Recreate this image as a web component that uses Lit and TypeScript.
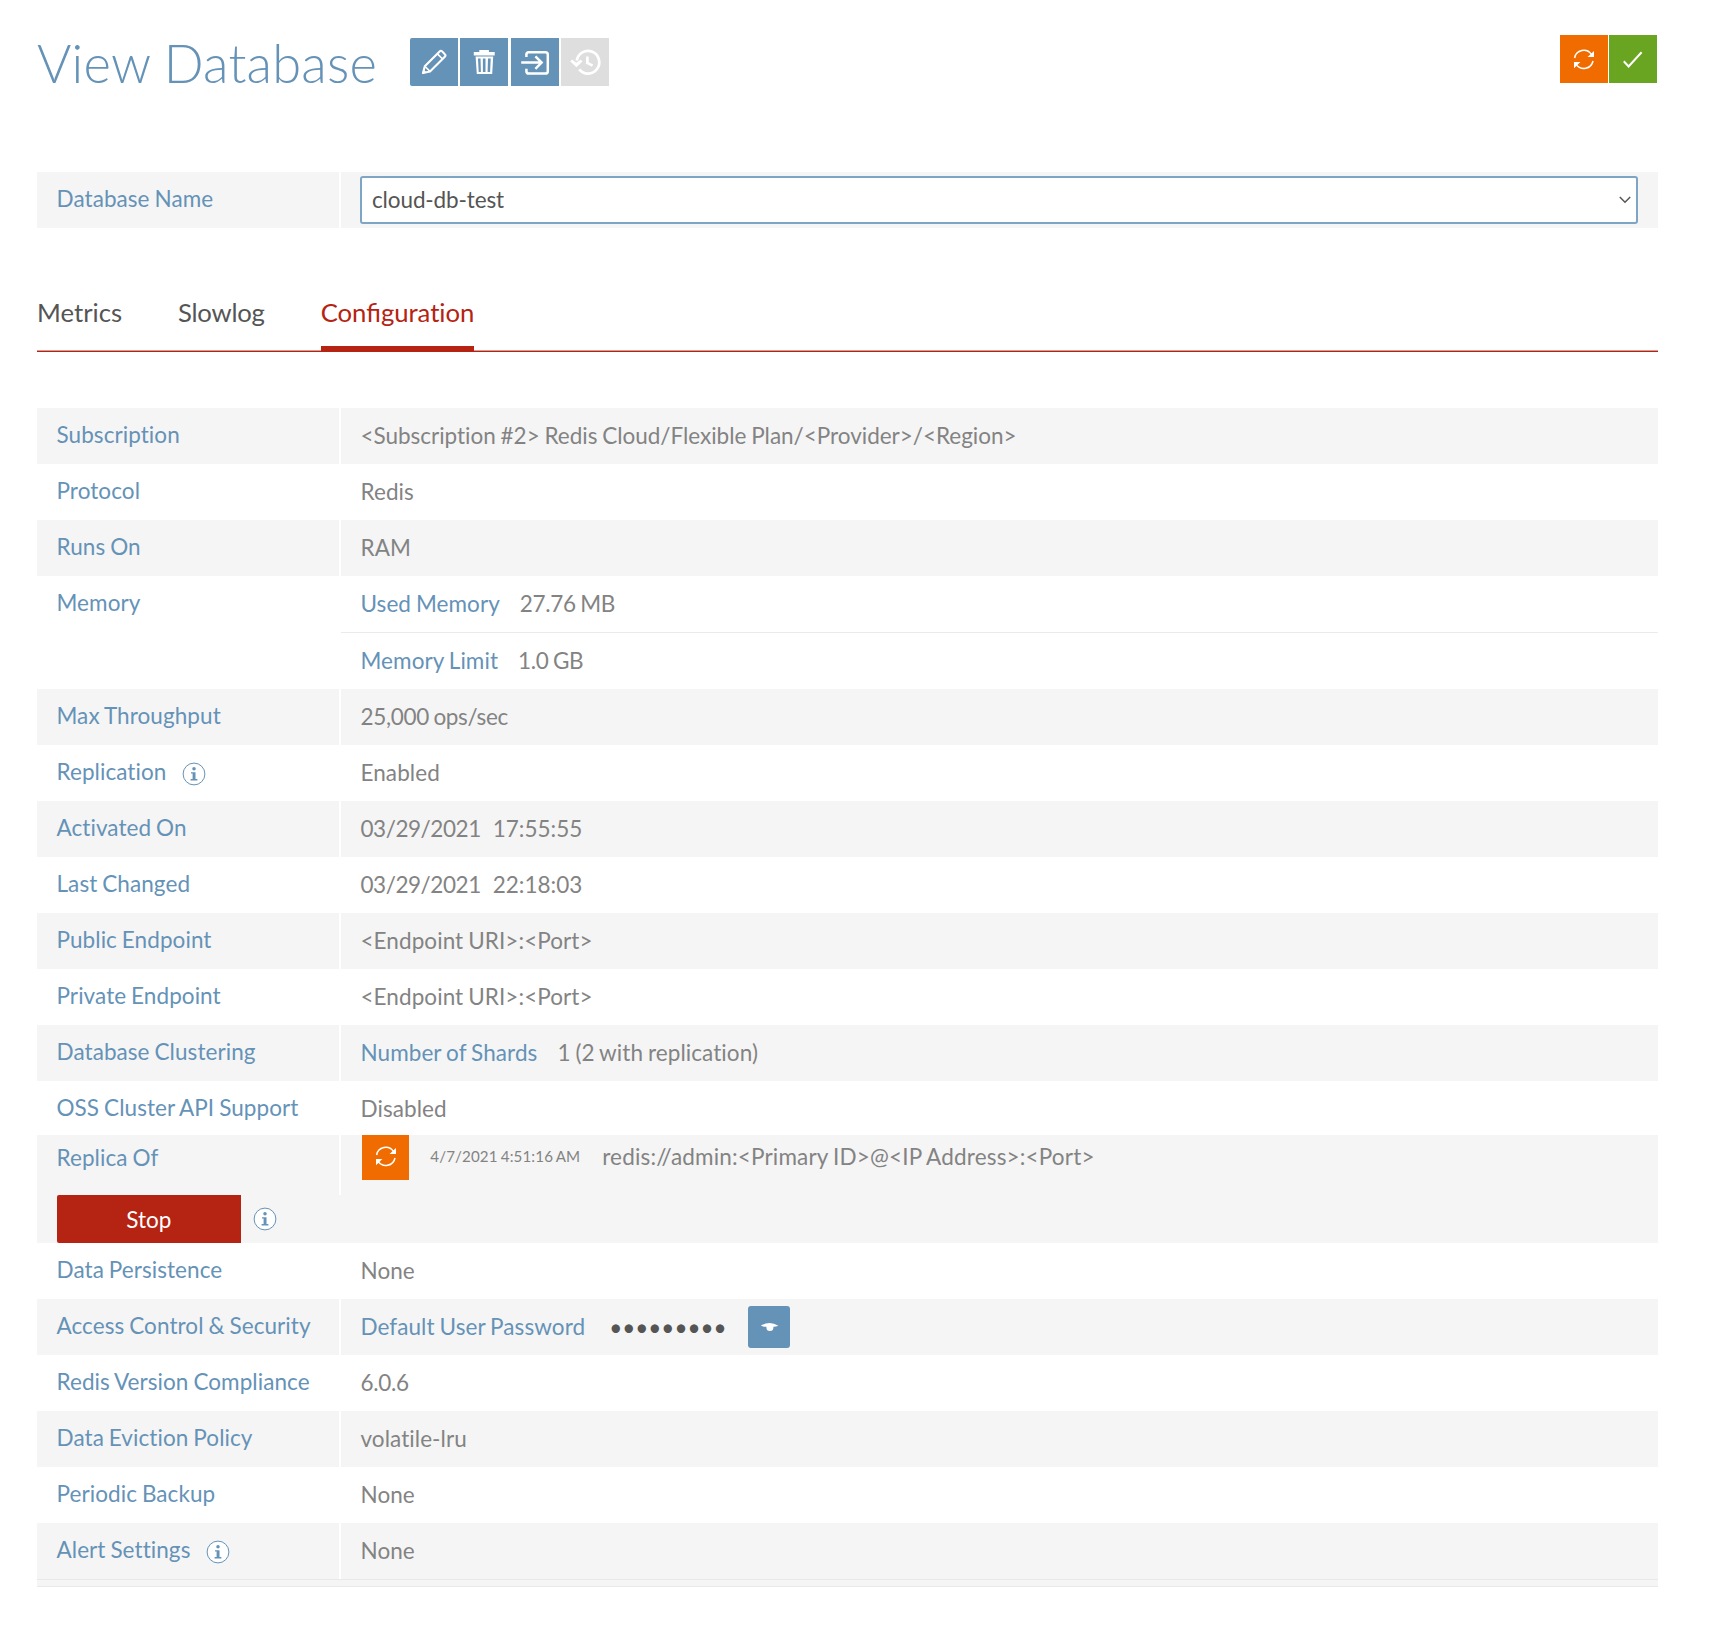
import { LitElement, html, css, svg, nothing, TemplateResult } from "lit";
import { customElement, property } from "lit/decorators.js";

const glyphs: Record<string, TemplateResult> = {
  edit: svg`<g fill="none" stroke="#fff" stroke-width="2.1" stroke-linejoin="round">
    <path d="M13 35 14.8 28.2 29.6 13.4C30.4 12.6 31.4 12.6 32.2 13.4L34.8 16.2C35.6 17 35.6 18 34.8 18.8L20 33.4Z"/>
    <path d="M27.2 15.6 32.6 21M14.8 28.2 20 33.4" stroke-width="1.6"/></g>
    <path d="M12.2 35.9 13.4 31.4 16.8 34.6Z" fill="#fff"/>`,
  trash: svg`<path fill="#fff" d="M19.3 12h9.6v2H34.7v3.6H13.8V14h5.5z"/>
    <path fill="#fff" fill-rule="evenodd" d="M15.6 18.6H33.2L32.2 36H16.8zM18 20.4 18.7 34H20.9L20.5 20.4zM22.9 20.4V34H25.5V20.4zM28 20.4 27.6 34H30.1L30.7 20.4z"/>`,
  enter: svg`<g fill="none" stroke="#fff" stroke-width="2.5">
    <path d="M15.4 19V16.6Q15.4 14.2 17.8 14.2H34.4Q36.8 14.2 36.8 16.6V33.2Q36.8 35.6 34.4 35.6H17.8Q15.4 35.6 15.4 33.2V30.8"/>
    <path d="M10.2 24.6H30M24.4 18.4 30.6 24.6 24.4 30.8"/></g>`,
  history: svg`<g fill="none" stroke="#fff" stroke-width="2.7">
    <path d="M15.8 22.6A11.3 11.3 0 1 1 18.2 31.4"/><path d="M26.4 18.6V25L31.6 27.6"/></g>
    <path d="M9.2 23.2 11.2 21.4 15.2 24.8 19.8 21.6 21.4 23.4 15.4 29.2Z" fill="#fff"/>`,
  sync: svg`<g fill="none" stroke="#fff" stroke-width="1.5">
    <path d="M14.6 23A9.3 9.3 0 0 1 31.4 19.4"/><path d="M33 26A9.3 9.3 0 0 1 16.2 29.4"/></g>
    <path d="M34 16V22H27.6ZM14 33.2V27H20.4Z" fill="#fff"/>`,
  check: svg`<path d="M14.8 26.2 19.6 31.4 32.6 17.2" fill="none" stroke="#fff" stroke-width="2"/>`,
};

@customElement("icon-tile")
export class IconTile extends LitElement {
  @property() icon = "edit";
  static styles = css`
    :host { display: flex; align-items: center; height: 48px; overflow: hidden; }
    svg { flex: none; width: 48px; height: 48px; }
  `;
  render() {
    return html`<svg viewBox="0 0 48 48">${glyphs[this.icon]}</svg>`;
  }
}

@customElement("info-dot")
export class InfoDot extends LitElement {
  static styles = css`
    :host { display: block; width: 24px; height: 24px; flex: none; }
    svg { display: block; }
  `;
  render() {
    return html`<svg width="24" height="24" viewBox="0 0 24 24">
      <circle cx="12" cy="12" r="10.9" fill="#fff" stroke="#6592b7" stroke-width="1"/>
      <circle cx="12" cy="6.8" r="1.75" fill="#6592b7"/>
      <path d="M9 10.2H13.5V16.9H15.4V18.4H8.6V16.9H10.6V11.6H9Z" fill="#6592b7"/>
    </svg>`;
  }
}

interface Row {
  label: string;
  value: string | TemplateResult;
  key?: string;
  info?: boolean;
}

const stamp = (day: string, time: string) =>
  html`<span class="day">${day}</span><span class="time">${time}</span>`;

const upper: Row[] = [
  {
    label: "Subscription",
    value: html`<span class="long">${"<Subscription #2> Redis Cloud/Flexible Plan/<Provider>/<Region>"}</span>`,
  },
  { label: "Protocol", value: "Redis" },
  { label: "Runs On", value: "RAM" },
];
const middle: Row[] = [
  { label: "Max Throughput", value: html`<span class="num">25,000 ops/sec</span>` },
  { label: "Replication", value: "Enabled", info: true },
  { label: "Activated On", value: stamp("03/29/2021", "17:55:55") },
  { label: "Last Changed", value: stamp("03/29/2021", "22:18:03") },
  { label: "Public Endpoint", value: "<Endpoint URI>:<Port>" },
  { label: "Private Endpoint", value: "<Endpoint URI>:<Port>" },
  { label: "Database Clustering", key: "Number of Shards", value: "1 (2 with replication)" },
];
const lower: Row[] = [
  { label: "Redis Version Compliance", value: html`<span class="num">6.0.6</span>` },
  { label: "Data Eviction Policy", value: "volatile-lru" },
  { label: "Periodic Backup", value: "None" },
  { label: "Alert Settings", value: "None", info: true },
];

@customElement("app-root")
export class AppRoot extends LitElement {
  static styles = css`
    :host {
      display: block;
      box-sizing: border-box;
      width: 1714px;
      height: 1640px;
      padding: 35px 56px 0 37px;
      background: #fff;
      font: 22.5px/56.4px Lato, "Open Sans", sans-serif;
      font-variant-ligatures: none;
      word-spacing: -0.9px;
      color: #838383;
      white-space: nowrap;
    }
    .top { display: flex; align-items: flex-start; height: 137px; }
    h1 {
      margin: 0;
      width: 373px;
      font-size: 52.5px;
      font-weight: 300;
      letter-spacing: 0.2px;
      line-height: 56px;
      color: #6592b7;
    }
    .tools { display: flex; gap: 2.6px; padding-top: 3px; }
    .tools icon-tile { width: 47.8px; background: #6592b7; }
    .tools .first { border-radius: 2px 0 0 2px; }
    .tools .off { background: #dedede; }
    .status { display: flex; gap: 1px; margin: 0 1px 0 auto; }
    .status icon-tile { width: 48px; }
    .orange { background: #f16c00; }
    .green { background: #6aa522; }
    .row {
      display: grid;
      grid-template: 100% / 302px 1fr;
      column-gap: 2px;
      height: 56px;
      letter-spacing: 0.07px;
    }
    .row > div { display: flex; padding-left: 19.5px; }
    .tint > div { background: #f5f5f5; }
    .label { line-height: 54px; color: #6592b7; }
    .label info-dot { margin: 17px 0 0 15.5px; }
    .key { color: #6592b7; margin-right: 20px; }
    .num { letter-spacing: -0.33px; }
    .long { letter-spacing: -0.02px; }
    .day { letter-spacing: -0.45px; margin-right: 12px; }
    .time { letter-spacing: 0; }
    .row > .field { padding: 4px 20px 4px 19px; }
    .select {
      box-sizing: border-box;
      flex: 1;
      display: flex;
      align-items: center;
      justify-content: space-between;
      height: 48px;
      padding: 0 5px 0 10px;
      border: 2px solid #7fa5c4;
      border-radius: 3px;
      background: #fff;
      color: #555;
      letter-spacing: -0.12px;
    }
    .select span { padding-top: 1px; }
    nav {
      display: flex;
      gap: 56px;
      height: 70px;
      margin: 54px 0 56px;
      box-shadow: inset 0 -1px #b52312, inset 0 -2px #d99c95;
      font-size: 25.7px;
      line-height: 60px;
      color: #555;
    }
    nav div { height: 70px; box-sizing: border-box; }
    nav .tight { letter-spacing: -0.24px; }
    nav .on { color: #b52312; border-bottom: 6px solid #b52312; letter-spacing: -0.05px; }
    .lig { font-variant-ligatures: common-ligatures; letter-spacing: 0; }
    .memory { height: 113px; }
    .memory > .stack { flex-direction: column; padding: 0; }
    .stack div { padding-left: 19.5px; height: 56px; display: flex; }
    .stack div + div { border-top: 1px solid #ebebeb; }
    .short { height: 54px; }
    .replica { height: 108px; background: #f5f5f5; }
    .replica .row {
      height: 60px;
      background: linear-gradient(#fff, #fff) 302px 0 / 2px 100% no-repeat;
    }
    .replica .label { line-height: 45px; }
    .replica icon-tile { width: 47px; height: 42px; padding-bottom: 3px; margin-left: 1px; }
    .when { font-size: 15.15px; line-height: 43px; letter-spacing: 0.12px; margin: 0 22px 0 21.8px; }
    .uri { line-height: 43px; letter-spacing: 0.17px; }
    .actions { display: flex; padding-left: 19.5px; align-items: center; height: 48px; }
    .stop {
      width: 184.5px;
      height: 48px;
      line-height: 49px;
      text-align: center;
      color: #fff;
      background: #b52312;
      border-radius: 2px 0 0 2px;
      margin-right: 12px;
    }
    .dots { color: #555; margin-left: 4px; letter-spacing: 0; line-height: 57px; }
    .eye {
      width: 42px;
      height: 42px;
      margin: 7px 0 0 21px;
      border-radius: 3px;
      background: #6592b7;
    }
    .foot { height: 6px; background: #f5f5f5; border: solid #e9e9e9; border-width: 1px 0 1px; }
  `;

  row(r: Row, tint: boolean, cls = "") {
    return html`<div class="row ${tint ? "tint" : ""} ${cls}">
      <div class="label">${r.label}${r.info ? html`<info-dot></info-dot>` : nothing}</div>
      <div>${r.key ? html`<span class="key">${r.key}</span>` : nothing}<span>${r.value}</span></div>
    </div>`;
  }

  render() {
    return html`
      <header class="top">
        <h1>View Database</h1>
        <div class="tools">
          <icon-tile class="first" icon="edit"></icon-tile>
          <icon-tile icon="trash"></icon-tile>
          <icon-tile icon="enter"></icon-tile>
          <icon-tile class="off" icon="history"></icon-tile>
        </div>
        <div class="status">
          <icon-tile class="orange" icon="sync"></icon-tile>
          <icon-tile class="green" icon="check"></icon-tile>
        </div>
      </header>
      <div class="row tint">
        <div class="label">Database Name</div>
        <div class="field">
          <div class="select">
            <span>cloud-db-test</span>
            <svg width="12" height="8" viewBox="0 0 12 8"><path d="M.8 1 6 6.2 11.2 1" fill="none" stroke="#555" stroke-width="1.5"/></svg>
          </div>
        </div>
      </div>
      <nav>
        <div>Metrics</div>
        <div class="tight">Slowlog</div>
        <div class="on"><span class="lig">Confi</span><span>guration</span></div>
      </nav>
      <main>
        ${upper.map((r, i) => this.row(r, i % 2 === 0))}
        <div class="row memory">
          <div class="label">Memory</div>
          <div class="stack">
            <div><span class="key">Used Memory</span><span class="num">27.76 MB</span></div>
            <div><span class="key">Memory Limit</span><span class="num">1.0 GB</span></div>
          </div>
        </div>
        ${middle.map((r, i) => this.row(r, i % 2 === 0))}
        ${this.row({ label: "OSS Cluster API Support", value: "Disabled" }, false, "short")}
        <section class="replica">
          <div class="row">
            <div class="label">Replica Of</div>
            <div>
              <icon-tile class="orange" icon="sync"></icon-tile>
              <span class="when">4/7/2021 4:51:16 AM</span>
              <span class="uri">redis://admin:&lt;Primary ID&gt;@&lt;IP Address&gt;:&lt;Port&gt;</span>
            </div>
          </div>
          <div class="actions"><div class="stop">Stop</div><info-dot></info-dot></div>
        </section>
        ${this.row({ label: "Data Persistence", value: "None" }, false)}
        <div class="row tint">
          <div class="label">Access Control &amp; Security</div>
          <div>
            <span class="key">Default User Password</span>
            <span class="dots">•••••••••</span>
            <svg class="eye" viewBox="0 0 42 42"><path d="M12.8 19.8Q21.5 14.2 30.4 19.8Q28 20.8 25.4 20.8V21.6A3.4 3.4 0 0 1 18.4 21.6V20.8Q15.5 20.8 12.8 19.8Z" fill="#fff"/></svg>
          </div>
        </div>
        ${lower.map((r, i) => this.row(r, i % 2 === 1))}
        <div class="foot"></div>
      </main>
    `;
  }
}
